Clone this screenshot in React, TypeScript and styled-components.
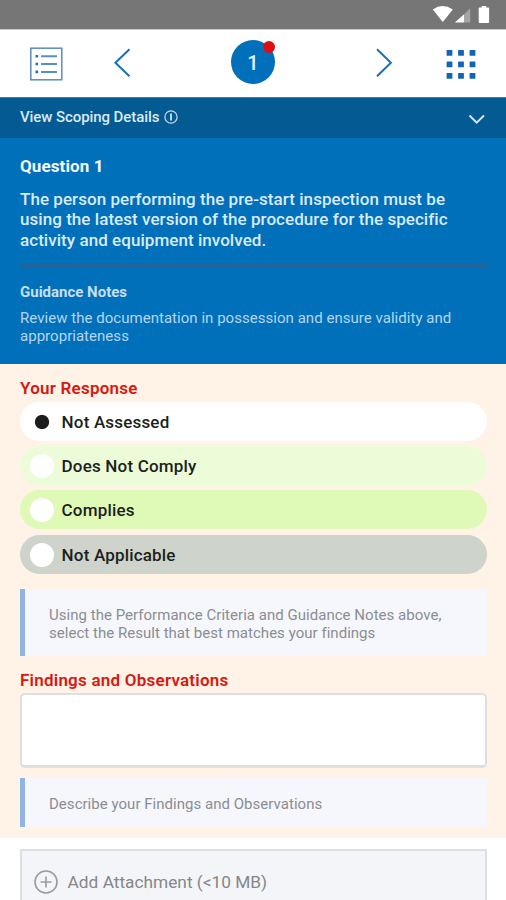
import React from "react";
import styled, { createGlobalStyle } from "styled-components";

const GlobalStyle = createGlobalStyle`
  * { box-sizing: border-box; }
  body { margin: 0; background: #fff; font-family: Roboto, "Liberation Sans", sans-serif; }
`;

const Screen = styled.main`
  display: flex;
  flex-direction: column;
  width: 506px;
  height: 900px;
  overflow: hidden;
  background: #fff;
`;

const StatusBar = styled.div`
  flex: none;
  height: 29px;
  background: #767676;
  display: flex;
  justify-content: flex-end;
  padding: 5px 16px 0 0;
`;

const Header = styled.header`
  flex: none;
  height: 68px;
  display: grid;
  grid-template-columns: 92px 68px 186px 76px 84px;
  align-items: start;
  border-top: 1px solid #c9c9c9;
  padding-top: 10px;
`;

const IconButton = styled.button<{ $left: number; $top: number }>`
  border: 0;
  background: none;
  padding: ${(p) => p.$top}px 0 0 ${(p) => p.$left}px;
  display: flex;
  justify-content: flex-start;
`;

const StepBadge = styled.div`
  position: relative;
  justify-self: center;
  width: 44px;
  height: 44px;
  border-radius: 50%;
  background: #0070ba;
  color: #e2f0fb;
  font-size: 20px;
  font-weight: 500;
  line-height: 46px;
  text-align: center;
`;

const AlertDot = styled.span`
  position: absolute;
  top: 1px;
  right: 0;
  width: 12px;
  height: 12px;
  border-radius: 50%;
  background: #e00e14;
`;

const ScopingBar = styled.div`
  flex: none;
  height: 41px;
  background: #045a92;
  border-top: 1px solid #3c7ba6;
  display: flex;
  align-items: center;
  padding: 0 20px 2px;
  color: #dbe9f5;
`;

const ScopingTitle = styled.span`
  flex: none;
  margin-right: 5px;
  font-size: 15px;
  line-height: 18px;
  font-weight: 500;
  letter-spacing: -0.08px;
`;

const ExpandButton = styled.button`
  margin-left: auto;
  border: 0;
  background: none;
  padding: 5px 0 0;
  display: flex;
`;

const QuestionPanel = styled.section`
  flex: none;
  height: 226px;
  background: #0070ba;
  padding: 18px 19px 0 20px;
  white-space: pre-line;
`;

const QuestionTitle = styled.h1`
  margin: 0 0 13px;
  font-size: 17px;
  line-height: 20px;
  font-weight: 700;
  letter-spacing: 0.1px;
  color: #f4faff;
`;

const QuestionText = styled.p`
  margin: 0;
  font-size: 17px;
  line-height: 20.3px;
  font-weight: 500;
  letter-spacing: 0.05px;
  color: #d9ebfa;
`;

const Divider = styled.hr`
  margin: 14px 0 16px;
  border: 0;
  height: 3px;
  background: #23659b;
`;

const NotesTitle = styled.h2`
  margin: 0 0 8px;
  font-size: 15px;
  line-height: 18px;
  font-weight: 700;
  color: #c6dff3;
`;

const NotesText = styled.p`
  margin: 0;
  font-size: 15px;
  line-height: 18px;
  letter-spacing: 0.035px;
  color: #b5d5ef;
`;

const ResponsePanel = styled.section`
  flex: none;
  height: 474px;
  background: #fef3e6;
  padding: 14px 19px 0 20px;
`;

const SectionLabel = styled.h2<{ $height: number }>`
  margin: 0;
  height: ${(p) => p.$height}px;
  font-size: 17px;
  line-height: 20px;
  font-weight: 600;
  letter-spacing: 0.23px;
  color: #d8180f;
`;

const OptionList = styled.div`
  display: flex;
  flex-direction: column;
  gap: 5.2px;
  margin-bottom: 15.4px;
`;

const Option = styled.label<{ $tone: string }>`
  height: 39px;
  border-radius: 20px;
  background: ${(p) => p.$tone};
  display: flex;
  align-items: center;
  gap: 7.6px;
  padding: 1px 0 0 10px;
  font-size: 17px;
  font-weight: 500;
  letter-spacing: 0.18px;
  color: #1c1f1c;
`;

const Radio = styled.span<{ $checked: boolean }>`
  width: 24px;
  height: 24px;
  border-radius: 50%;
  background: ${(p) => (p.$checked ? "radial-gradient(circle, #1c1c1c 6.6px, #fff 7.6px)" : "#fff")};
`;

const Hint = styled.div<{ $height: number }>`
  height: ${(p) => p.$height}px;
  border-left: 5px solid #92b4e2;
  background: #f5f7fc;
  display: flex;
  align-items: center;
  padding: 3px 0 0 24px;
  font-size: 15px;
  line-height: 18px;
  letter-spacing: 0.03px;
  color: #8b8d92;
  white-space: pre-line;
`;

const FindingsGroup = styled.div`
  padding-top: 14px;
`;

const Notes = styled.textarea`
  display: block;
  width: 100%;
  height: 75px;
  margin-bottom: 10px;
  border: 2px solid #dedfe0;
  border-bottom-width: 3px;
  border-radius: 5px;
  background: #fff;
  resize: none;
  outline: none;
`;

const AttachArea = styled.section`
  padding: 11px 19px 0 20px;
`;

const AttachButton = styled.button`
  width: 100%;
  height: 66px;
  border: 2px solid #dddfe3;
  background: #f3f5f9;
  display: flex;
  align-items: center;
  gap: 9.6px;
  padding: 0 0 0 12px;
  font: 400 17.3px Roboto, sans-serif;
  color: #85878a;
`;

const ListIcon = () => (
  <svg width="34" height="34" viewBox="0 0 34 34" fill="none">
    <rect x="1.8" y="1.2" width="31" height="31.6" stroke="#5b8cc0" strokeWidth="1.5" />
    <path d="M12 9.2h16M12 17h16M12 24.9h16" stroke="#5790c6" strokeWidth="2" />
    <path d="M6.5 9.2h2.6M6.5 17h2.6M6.5 24.9h2.6" stroke="#1f6fb4" strokeWidth="2.6" />
  </svg>
);

const Chevron = ({ d, w, h, color = "#1a70b8" }: { d: string; w: number; h: number; color?: string }) => (
  <svg width={w} height={h} viewBox={`0 0 ${w} ${h}`} fill="none">
    <path d={d} stroke={color} strokeWidth="2" />
  </svg>
);

const GridIcon = () => (
  <svg width="30" height="30" viewBox="0 0 30 30" fill="#1265b0">
    {[0, 11.5, 23].map((y) => [0, 11.5, 23].map((x) => <rect key={`${x}-${y}`} x={x + 0.6} y={y + 1} width="5.8" height="5.8" rx=".5" />))}
  </svg>
);

const SystemIcons = () => (
  <svg width="58" height="19" viewBox="0 0 58 19" fill="#fff">
    <path d="M.8 4.4Q10.6-2.2 20.8 4.4L10.8 17Z" />
    <path d="M22.8 17.4 32.4 9V17.4Z" />
    <path d="M32.4 9 38.2 3.2V17.4H32.4Z" fill="#a5a5a5" />
    <path d="M47.5 2.5H49.6V.9h4.6v1.6h2.1q.8 0 .8.8V17q0 .9-.8.9h-8.8q-.8 0-.8-.9V3.3q0-.8.8-.8Z" />
  </svg>
);

const InfoIcon = () => (
  <svg width="14" height="14" viewBox="0 0 14 14" fill="none" stroke="#c9dcec">
    <circle cx="7" cy="7" r="6.1" strokeWidth="1.2" />
    <path d="M7 3.4v7.2" strokeWidth="1.9" />
  </svg>
);

const PlusIcon = () => (
  <svg width="24" height="24" viewBox="0 0 24 24" fill="none" stroke="#9a9b9e" strokeWidth="1.6">
    <circle cx="12" cy="12" r="11" />
    <path d="M12 6.5v11M6.5 12h11" />
  </svg>
);

const options = [
  { label: "Not Assessed", tone: "#ffffff", checked: true },
  { label: "Does Not Comply", tone: "#ecfcd9", checked: false },
  { label: "Complies", tone: "#defab6", checked: false },
  { label: "Not Applicable", tone: "#ced4cb", checked: false },
];

export default function App() {
  return (
    <Screen>
      <GlobalStyle />
      <StatusBar>
        <SystemIcons />
      </StatusBar>
      <Header>
        <IconButton $left={29} $top={7} aria-label="List"><ListIcon /></IconButton>
        <IconButton $left={21} $top={8} aria-label="Previous">
          <Chevron w={18} h={30} d="M16.5 1.2 2.4 14.7 16.5 28.2" />
        </IconButton>
        <StepBadge>1<AlertDot /></StepBadge>
        <IconButton $left={30} $top={8} aria-label="Next">
          <Chevron w={18} h={30} d="M1 1.2 14.9 14.7 1 28.2" />
        </IconButton>
        <IconButton $left={24} $top={9} aria-label="Menu"><GridIcon /></IconButton>
      </Header>
      <ScopingBar>
        <ScopingTitle>View Scoping Details</ScopingTitle>
        <InfoIcon />
        <ExpandButton aria-label="Expand">
          <Chevron w={19} h={12} d="M2.5 1.5 9.7 8.7 17 1.5" color="#d5e5f3" />
        </ExpandButton>
      </ScopingBar>
      <QuestionPanel>
        <QuestionTitle>Question 1</QuestionTitle>
        <QuestionText>{"The person performing the pre-start inspection must be\nusing the latest version of the procedure for the specific\nactivity and equipment involved."}</QuestionText>
        <Divider />
        <NotesTitle>Guidance Notes</NotesTitle>
        <NotesText>{"Review the documentation in possession and ensure validity and\nappropriateness"}</NotesText>
      </QuestionPanel>
      <ResponsePanel>
        <SectionLabel $height={24}>Your Response</SectionLabel>
        <OptionList>
          {options.map((o) => (
            <Option key={o.label} $tone={o.tone}>
              <Radio $checked={o.checked} />
              {o.label}
            </Option>
          ))}
        </OptionList>
        <Hint $height={67}>{"Using the Performance Criteria and Guidance Notes above,\nselect the Result that best matches your findings"}</Hint>
        <FindingsGroup>
          <SectionLabel $height={23}>Findings and Observations</SectionLabel>
          <Notes aria-label="Findings and Observations" />
          <Hint $height={49}>Describe your Findings and Observations</Hint>
        </FindingsGroup>
      </ResponsePanel>
      <AttachArea>
        <AttachButton><PlusIcon />Add Attachment (&lt;10 MB)</AttachButton>
      </AttachArea>
    </Screen>
  );
}
